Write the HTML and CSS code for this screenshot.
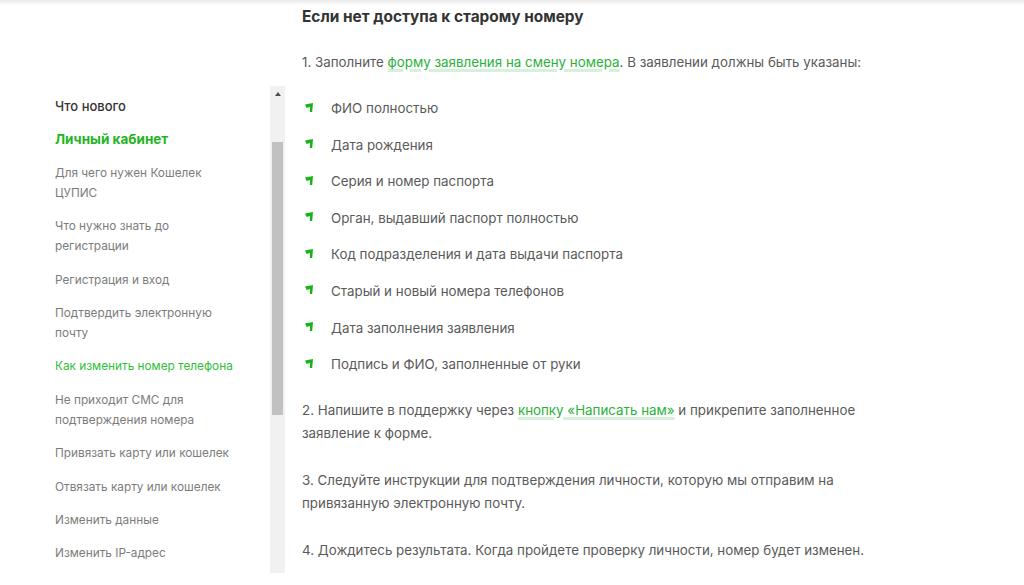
FILE: index.html
```html
<!DOCTYPE html>
<html lang="ru">
<head>
<meta charset="utf-8">
<title>Как изменить номер телефона</title>
<link rel="stylesheet" href="styles.css">
</head>
<body>
<div class="page">
  <aside class="sidebar">
    <nav class="nav-list">
      <a class="nav-section">Что нового</a>
      <a class="nav-section nav-section-active">Личный кабинет</a>
      <a class="nav-item">Для чего нужен Кошелек ЦУПИС</a>
      <a class="nav-item">Что нужно знать до регистрации</a>
      <a class="nav-item">Регистрация и вход</a>
      <a class="nav-item">Подтвердить электронную почту</a>
      <a class="nav-item nav-item-active">Как изменить номер телефона</a>
      <a class="nav-item">Не приходит СМС для подтверждения номера</a>
      <a class="nav-item">Привязать карту или кошелек</a>
      <a class="nav-item">Отвязать карту или кошелек</a>
      <a class="nav-item">Изменить данные</a>
      <a class="nav-item">Изменить IP-адрес</a>
    </nav>
    <div class="scrollbar">
      <div class="scroll-arrow"></div>
      <div class="scroll-gap"></div>
      <div class="scroll-thumb"></div>
    </div>
  </aside>
  <main class="content">
    <h2 class="title">Если нет доступа к старому номеру</h2>
    <p class="para">1. Заполните <a class="link">форму заявления на смену номера</a>. В заявлении должны быть указаны:</p>
    <ul class="bullets">
      <li class="bullet"><svg class="bullet-icon" viewBox="0 0 8 9" width="8" height="9"><polygon points="0,1.4 8,0 7.2,9 4.9,9 5,3.9 1.6,5" fill="#17b417"/></svg><span>ФИО полностью</span></li>
      <li class="bullet"><svg class="bullet-icon" viewBox="0 0 8 9" width="8" height="9"><polygon points="0,1.4 8,0 7.2,9 4.9,9 5,3.9 1.6,5" fill="#17b417"/></svg><span>Дата рождения</span></li>
      <li class="bullet"><svg class="bullet-icon" viewBox="0 0 8 9" width="8" height="9"><polygon points="0,1.4 8,0 7.2,9 4.9,9 5,3.9 1.6,5" fill="#17b417"/></svg><span>Серия и номер паспорта</span></li>
      <li class="bullet"><svg class="bullet-icon" viewBox="0 0 8 9" width="8" height="9"><polygon points="0,1.4 8,0 7.2,9 4.9,9 5,3.9 1.6,5" fill="#17b417"/></svg><span>Орган, выдавший паспорт полностью</span></li>
      <li class="bullet"><svg class="bullet-icon" viewBox="0 0 8 9" width="8" height="9"><polygon points="0,1.4 8,0 7.2,9 4.9,9 5,3.9 1.6,5" fill="#17b417"/></svg><span>Код подразделения и дата выдачи паспорта</span></li>
      <li class="bullet"><svg class="bullet-icon" viewBox="0 0 8 9" width="8" height="9"><polygon points="0,1.4 8,0 7.2,9 4.9,9 5,3.9 1.6,5" fill="#17b417"/></svg><span>Старый и новый номера телефонов</span></li>
      <li class="bullet"><svg class="bullet-icon" viewBox="0 0 8 9" width="8" height="9"><polygon points="0,1.4 8,0 7.2,9 4.9,9 5,3.9 1.6,5" fill="#17b417"/></svg><span>Дата заполнения заявления</span></li>
      <li class="bullet"><svg class="bullet-icon" viewBox="0 0 8 9" width="8" height="9"><polygon points="0,1.4 8,0 7.2,9 4.9,9 5,3.9 1.6,5" fill="#17b417"/></svg><span>Подпись и ФИО, заполненные от руки</span></li>
    </ul>
    <p class="para">2. Напишите в поддержку через <a class="link">кнопку «Написать нам»</a> и прикрепите заполненное заявление к форме.</p>
    <p class="para">3. Следуйте инструкции для подтверждения личности, которую мы отправим на привязанную электронную почту.</p>
    <p class="para">4. Дождитесь результата. Когда пройдете проверку личности, номер будет изменен.</p>
  </main>
</div>
</body>
</html>
```
FILE: styles.css
```css
html, body {
  margin: 0;
  padding: 0;
}
body {
  width: 1024px;
  height: 585px;
  overflow: hidden;
  font-family: Inter, "Noto Sans", sans-serif;
  background: linear-gradient(to bottom, #e9e9e9 0, #ffffff 5px) no-repeat, #ffffff;
  color: #5a5a5a;
}
.page {
  display: flex;
  align-items: flex-start;
  padding-left: 40px;
}
.sidebar {
  display: flex;
  width: 245px;
  height: 487px;
  margin-top: 86px;
  overflow: hidden;
}
.nav-list {
  flex: 1;
  display: flex;
  flex-direction: column;
  gap: 13.4px;
  padding: 10px 33px 0 15px;
}
.nav-section {
  font-size: 13px;
  line-height: 20px;
  font-weight: 500;
  color: #333333;
}
.nav-section-active {
  color: #1fb51f;
  font-size: 13.5px;
  font-weight: 700;
}
.nav-item {
  font-size: 11.8px;
  line-height: 20px;
  color: #7c7c7c;
}
.nav-item-active {
  color: #2fbf3a;
}
.scrollbar {
  width: 15px;
  flex: none;
  background: #f1f1f1;
  display: flex;
  flex-direction: column;
  align-items: center;
}
.scroll-arrow {
  margin-top: 6px;
  width: 0;
  height: 0;
  border-left: 3.5px solid transparent;
  border-right: 3.5px solid transparent;
  border-bottom: 4px solid #505050;
}
.scroll-gap {
  height: 46px;
}
.scroll-thumb {
  width: 11px;
  height: 273px;
  background: #c1c1c1;
}
.content {
  margin-left: 17px;
  width: 580px;
  padding-top: 5px;
}
.title {
  margin: 0;
  font-size: 15.4px;
  line-height: 24px;
  font-weight: 700;
  color: #333333;
}
.para {
  margin: 22px 0 0;
  font-size: 13.35px;
  line-height: 23px;
  color: #5a5a5a;
}
.link {
  color: #2ab13a;
  text-decoration-line: underline;
  text-decoration-color: #d6f1da;
  text-decoration-thickness: 3px;
  text-underline-offset: 2px;
}
.bullets {
  list-style: none;
  margin: 23px 0 0;
  padding: 0;
  display: flex;
  flex-direction: column;
  gap: 14.6px;
}
.bullet {
  display: flex;
  align-items: center;
  font-size: 13.35px;
  line-height: 22px;
  color: #5a5a5a;
}
.bullet-icon {
  margin: 0 18px 2px 3px;
  flex: none;
}
.para + .para {
  margin-top: 24px;
}
.bullets + .para {
  margin-top: 23.5px;
}
```
